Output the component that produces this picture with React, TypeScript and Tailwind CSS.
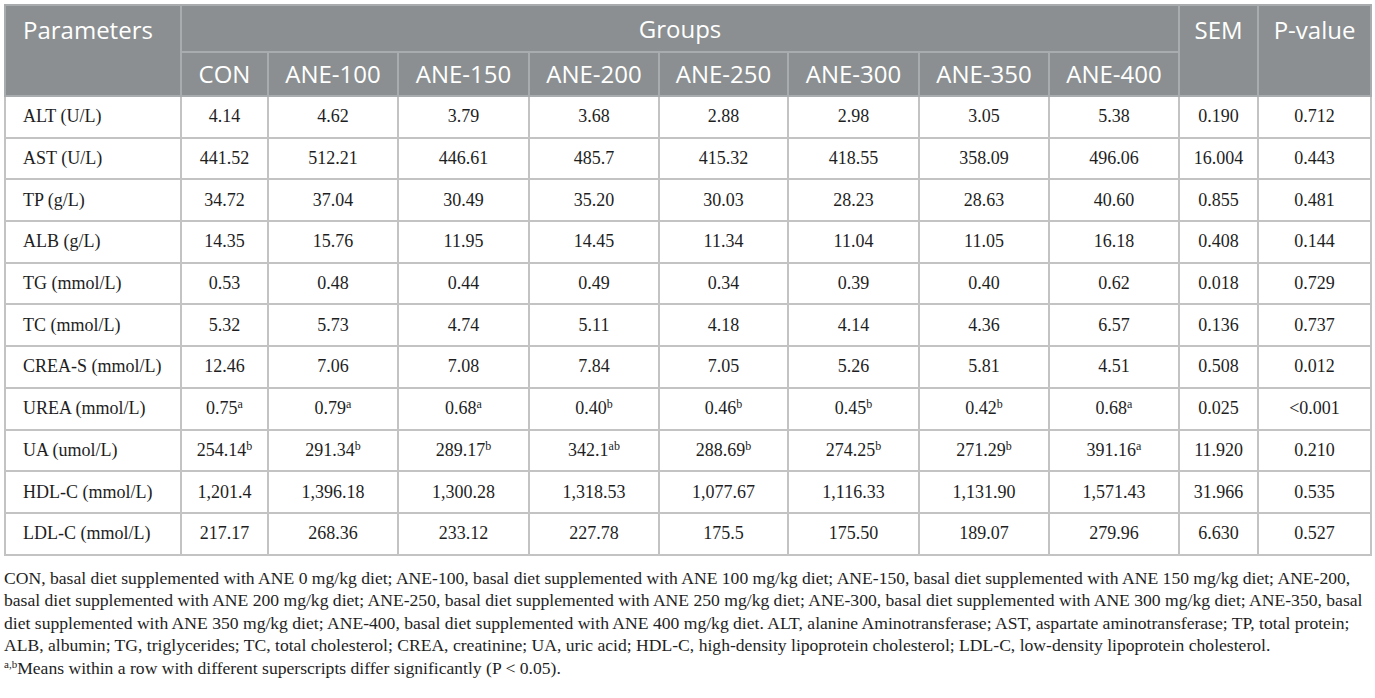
import React from "react";

const groups = ["CON", "ANE-100", "ANE-150", "ANE-200", "ANE-250", "ANE-300", "ANE-350", "ANE-400"];

// value|superscript
const rows: string[][] = [
  ["ALT (U/L)", "4.14", "4.62", "3.79", "3.68", "2.88", "2.98", "3.05", "5.38", "0.190", "0.712"],
  ["AST (U/L)", "441.52", "512.21", "446.61", "485.7", "415.32", "418.55", "358.09", "496.06", "16.004", "0.443"],
  ["TP (g/L)", "34.72", "37.04", "30.49", "35.20", "30.03", "28.23", "28.63", "40.60", "0.855", "0.481"],
  ["ALB (g/L)", "14.35", "15.76", "11.95", "14.45", "11.34", "11.04", "11.05", "16.18", "0.408", "0.144"],
  ["TG (mmol/L)", "0.53", "0.48", "0.44", "0.49", "0.34", "0.39", "0.40", "0.62", "0.018", "0.729"],
  ["TC (mmol/L)", "5.32", "5.73", "4.74", "5.11", "4.18", "4.14", "4.36", "6.57", "0.136", "0.737"],
  ["CREA-S (mmol/L)", "12.46", "7.06", "7.08", "7.84", "7.05", "5.26", "5.81", "4.51", "0.508", "0.012"],
  ["UREA (mmol/L)", "0.75|a", "0.79|a", "0.68|a", "0.40|b", "0.46|b", "0.45|b", "0.42|b", "0.68|a", "0.025", "<0.001"],
  ["UA (umol/L)", "254.14|b", "291.34|b", "289.17|b", "342.1|ab", "288.69|b", "274.25|b", "271.29|b", "391.16|a", "11.920", "0.210"],
  ["HDL-C (mmol/L)", "1,201.4", "1,396.18", "1,300.28", "1,318.53", "1,077.67", "1,116.33", "1,131.90", "1,571.43", "31.966", "0.535"],
  ["LDL-C (mmol/L)", "217.17", "268.36", "233.12", "227.78", "175.5", "175.50", "189.07", "279.96", "6.630", "0.527"],
];

function Cell({ value }: { value: string }) {
  const [num, sup] = value.split("|");
  return (
    <td className="h-[41.7px] border-2 border-[#c3c3c3] text-center align-middle">
      {num}
      {sup && <sup className="text-[12px]">{sup}</sup>}
    </td>
  );
}

export default function App() {
  const head = "border-2 border-[#a9acae] font-normal";
  return (
    <main className="min-h-screen bg-white pl-[4px] pt-[4px]">
      <table
        className="w-[1366px] table-fixed border-collapse border-2 border-[#c8c8c8] text-[#1e1e1e]"
        style={{ fontFamily: '"Liberation Serif", serif' }}
      >
        <colgroup>
          <col className="w-[176px]" />
          <col className="w-[87px]" />
          <col className="w-[130px]" />
          <col className="w-[131px]" />
          <col className="w-[130px]" />
          <col className="w-[129px]" />
          <col className="w-[131px]" />
          <col className="w-[130px]" />
          <col className="w-[130px]" />
          <col className="w-[79px]" />
          <col className="w-[113px]" />
        </colgroup>
        <thead
          className="bg-[#8b8f91] text-[24px] text-white"
          style={{ fontFamily: '"Open Sans", sans-serif' }}
        >
          <tr className="h-[47px]">
            <th rowSpan={2} className={`${head} pl-[17px] pt-[6px] text-left align-top`}>
              Parameters
            </th>
            <th colSpan={8} className={`${head} text-center`}>
              Groups
            </th>
            <th rowSpan={2} className={`${head} pt-[6px] text-center align-top`}>
              SEM
            </th>
            <th rowSpan={2} className={`${head} pt-[6px] text-center align-top`}>
              P-value
            </th>
          </tr>
          <tr className="h-[44px]">
            {groups.map((g) => (
              <th key={g} className={`${head} text-center`}>
                {g}
              </th>
            ))}
          </tr>
        </thead>
        <tbody className="text-[18px]">
          {rows.map((r) => (
            <tr key={r[0]}>
              <td className="h-[41.7px] border-2 border-[#c3c3c3] pl-[17px] align-middle">{r[0]}</td>
              {r.slice(1).map((v, i) => (
                <Cell key={i} value={v} />
              ))}
            </tr>
          ))}
        </tbody>
      </table>

      <div
        className="mt-[11px] w-[1368px] whitespace-nowrap text-[17.6px] leading-[22.5px] text-[#1e1e1e]"
        style={{ fontFamily: '"Liberation Serif", serif' }}
      >
        <p>
          CON, basal diet supplemented with ANE 0 mg/kg diet; ANE-100, basal diet supplemented with ANE 100 mg/kg
          diet; ANE-150, basal diet supplemented with ANE 150 mg/kg diet; ANE-200,
          <br />
          basal diet supplemented with ANE 200 mg/kg diet; ANE-250, basal diet supplemented with ANE 250 mg/kg diet;
          ANE-300, basal diet supplemented with ANE 300 mg/kg diet; ANE-350, basal
          <br />
          diet supplemented with ANE 350 mg/kg diet; ANE-400, basal diet supplemented with ANE 400 mg/kg diet. ALT,
          alanine Aminotransferase; AST, aspartate aminotransferase; TP, total protein;
          <br />
          ALB, albumin; TG, triglycerides; TC, total cholesterol; CREA, creatinine; UA, uric acid; HDL-C,
          high-density lipoprotein cholesterol; LDL-C, low-density lipoprotein cholesterol.
        </p>
        <p>
          <sup className="text-[11px]">a,b</sup>Means within a row with different superscripts differ significantly (P
          &lt; 0.05).
        </p>
      </div>
    </main>
  );
}
